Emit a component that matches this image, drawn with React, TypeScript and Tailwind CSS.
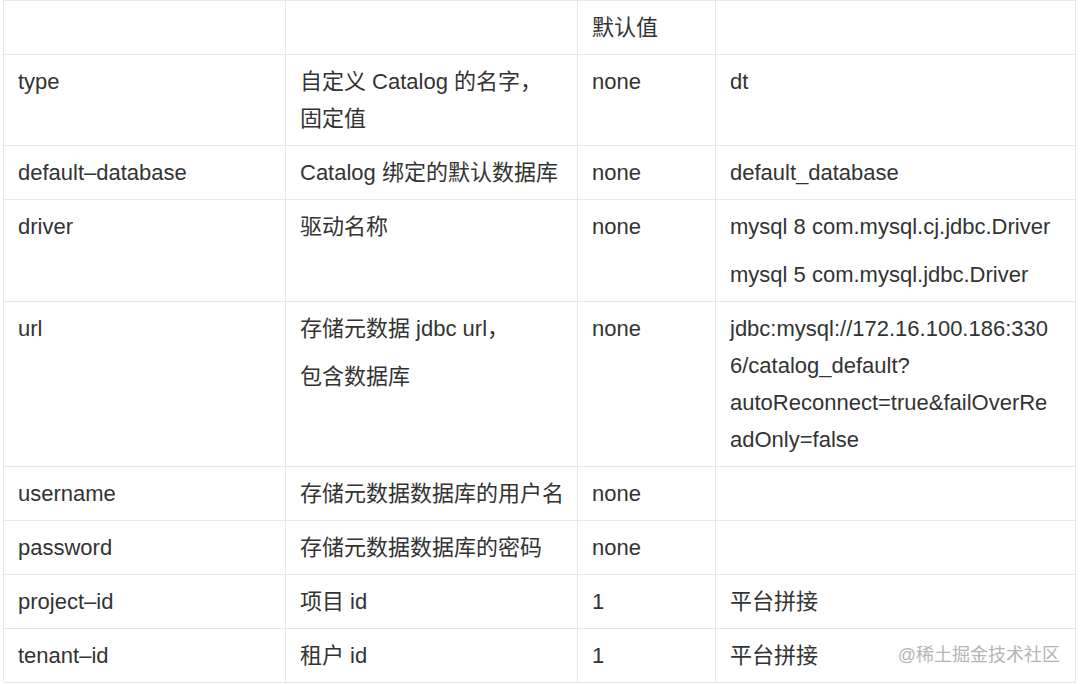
const rows: { name: string; desc: string[]; def: string; value: string[] }[] = [
  { name: "type", desc: ["自定义 Catalog 的名字，\n固定值"], def: "none", value: ["dt"] },
  { name: "default–database", desc: ["Catalog 绑定的默认数据库"], def: "none", value: ["default_database"] },
  {
    name: "driver",
    desc: ["驱动名称"],
    def: "none",
    value: ["mysql 8 com.mysql.cj.jdbc.Driver", "mysql 5 com.mysql.jdbc.Driver"],
  },
  {
    name: "url",
    desc: ["存储元数据 jdbc url，", "包含数据库"],
    def: "none",
    value: ["jdbc:mysql://172.16.100.186:330\n6/catalog_default?\nautoReconnect=true&failOverRe\nadOnly=false"],
  },
  { name: "username", desc: ["存储元数据数据库的用户名"], def: "none", value: [] },
  { name: "password", desc: ["存储元数据数据库的密码"], def: "none", value: [] },
  { name: "project–id", desc: ["项目 id"], def: "1", value: ["平台拼接"] },
  { name: "tenant–id", desc: ["租户 id"], def: "1", value: ["平台拼接"] },
];

function Paras({ items }: { items: string[] }) {
  return (
    <>
      {items.map((t, i) => (
        <p key={i} className={i > 0 ? "mt-[11px] whitespace-pre" : "whitespace-pre"}>
          {t}
        </p>
      ))}
    </>
  );
}

export default function App() {
  const cell = "border border-[#e8e8e8] pl-[14px] pr-[4px] py-[8px] align-top whitespace-pre";
  return (
    <div
      className="relative w-[1080px] h-[684px] bg-white overflow-hidden text-[#333] text-[22px] leading-[37px]"
      style={{ fontFamily: '"Liberation Sans", "Noto Sans CJK SC", sans-serif' }}
    >
      <table className="ml-[3px] w-[1072px] border-collapse table-fixed">
        <colgroup>
          <col className="w-[282px]" />
          <col className="w-[292px]" />
          <col className="w-[138px]" />
          <col className="w-[360px]" />
        </colgroup>
        <tbody>
          <tr>
            <td className={cell}></td>
            <td className={cell}></td>
            <td className={cell}>默认值</td>
            <td className={cell}></td>
          </tr>
          {rows.map((r) => (
            <tr key={r.name}>
              <td className={cell}>{r.name}</td>
              <td className={cell}>
                <Paras items={r.desc} />
              </td>
              <td className={cell}>{r.def}</td>
              <td className={cell}>
                <Paras items={r.value} />
              </td>
            </tr>
          ))}
        </tbody>
      </table>
      <span className="absolute right-[20px] top-[641px] text-[18px] leading-[28px] text-[#b5b5b5]">
        @稀土掘金技术社区
      </span>
    </div>
  );
}
